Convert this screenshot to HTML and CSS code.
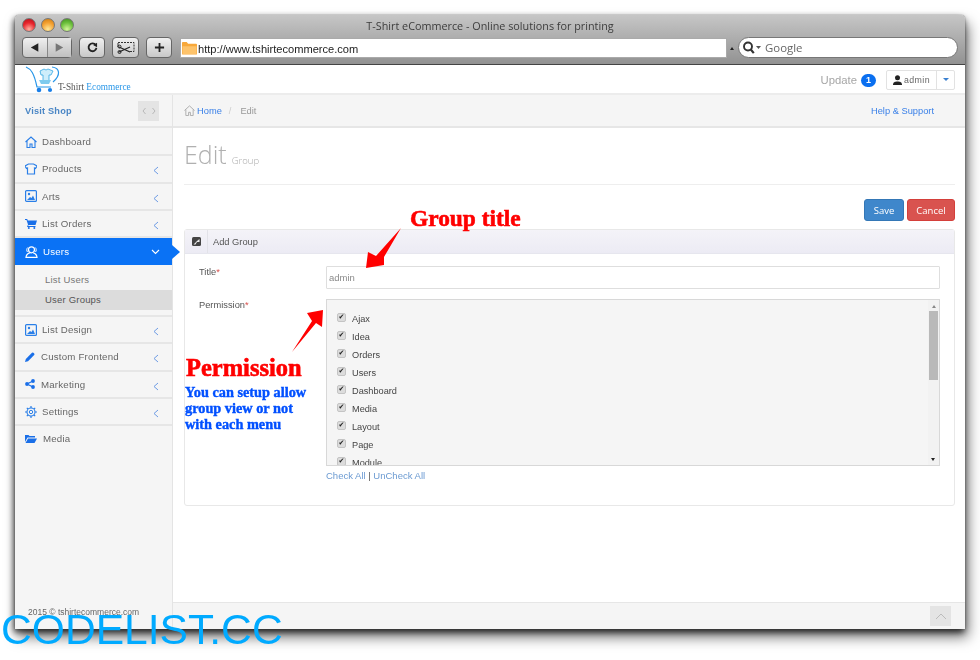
FILE: index.html
```html
<!DOCTYPE html>
<html lang="en">
<head>
<meta charset="utf-8">
<title>T-Shirt eCommerce</title>
<link rel="stylesheet" href="styles.css">
</head>
<body>
<div class="window">
  <header class="chrome">
    <div class="titlebar">
      <div class="lights"><i class="light red"></i><i class="light amber"></i><i class="light green"></i></div>
      <div class="wintitle">T-Shirt eCommerce - Online solutions for printing</div>
    </div>
    <div class="toolbar">
      <div class="tbtn pair">
        <span class="half"><svg width="10" height="9" viewBox="0 0 12 10"><path d="M1 5 10 0v10z" fill="#222"/></svg></span>
        <span class="half"><svg width="10" height="9" viewBox="0 0 12 10"><path d="M11 5 2 0v10z" fill="#777"/></svg></span>
      </div>
      <div class="tbtn w26"><svg width="11" height="11" viewBox="0 0 12 12"><path d="M9.500 3.200A4.300 4.300 0 1 0 10.300 6.500" fill="none" stroke="#222" stroke-width="2"/><path d="M6.600 3.400 11 .8v4.800z" fill="#222"/></svg></div>
      <div class="tbtn w27"><svg width="18" height="13" viewBox="0 0 18 13"><path d="M1 1.500h16v9h-5" fill="none" stroke="#333" stroke-dasharray="2 1"/><path d="M1 2v4" stroke="#333"/><path d="M2 6 13 11M2 11 13 6" stroke="#222" stroke-width="1.200"/><circle cx="2.500" cy="5.600" r="1.500" fill="none" stroke="#222"/><circle cx="2.500" cy="11" r="1.500" fill="none" stroke="#222"/></svg></div>
      <div class="tbtn w26"><svg width="11" height="11" viewBox="0 0 12 12"><path d="M6 1v10M1 6h10" stroke="#222" stroke-width="2"/></svg></div>
      <div class="urlbar">
        <svg class="folder" width="15" height="14" viewBox="0 0 16 14"><path d="M0 3V1.500Q0 .5 1 .5h4l1.500 2H15q1 0 1 1V13q0 1-1 1H1q-1 0-1-1z" fill="#f8a83a"/><path d="M.5 5h15v8.500H.5z" fill="#fdc36b"/></svg>
        <span>http://www.tshirtecommerce.com</span>
      </div>
      <div class="dropdot"></div>
      <div class="search">
        <svg width="20" height="13" viewBox="0 0 20 13"><circle cx="6" cy="5.500" r="4" fill="none" stroke="#333" stroke-width="1.900"/><path d="M8.800 8.500l3 3.600" stroke="#333" stroke-width="2.200"/><path d="M14 5h5l-2.500 3z" fill="#555"/></svg>
        <span>Google</span>
      </div>
    </div>
  </header>

  <div class="topbar">
    <div class="logo">
      <svg width="38" height="27" viewBox="0 0 38 27">
        <path d="M1 1C6 3 9 7 12 21h14" fill="none" stroke="#2a97e8" stroke-width="1.200"/>
        <path d="M27 1c8 1 9 8 1 15" fill="none" stroke="#2a97e8" stroke-width="1.200"/>
        <path d="M15 5l4-2 2 1 2-1 5 2-2 4h-2v6h-6V9h-2z" fill="#cfeefb" stroke="#35a7e2" stroke-width=".8"/>
        <path d="M14 14h12l-2 4H16z" fill="#7fcbee"/>
        <circle cx="14" cy="24" r="2.300" fill="#1a7fe8"/><circle cx="25" cy="24" r="2.100" fill="#1a7fe8"/>
      </svg>
      <span class="logotext">T-Shirt <b>Ecommerce</b></span>
    </div>
    <div class="topright">
      <span class="update">Update</span>
      <span class="badge">1</span>
      <div class="userbtn">
        <span class="username"><svg width="9" height="10" viewBox="0 0 9 10"><circle cx="4.500" cy="2.700" r="2.500" fill="#222"/><path d="M0 10c0-3 2-3.500 4.500-3.500S9 7 9 10z" fill="#222"/></svg>admin</span>
        <span class="usercaret"><i></i></span>
      </div>
    </div>
  </div>

  <div class="body">
    <aside class="sidebar">
      <div class="visit">
        <span>Visit Shop</span>
        <div class="arrows"><svg width="14" height="8" viewBox="0 0 14 8"><path d="M3.500 1 1 4l2.500 3M10.500 1 13 4l-2.500 3" fill="none" stroke="#b8b8b8"/></svg></div>
      </div>
      <nav class="menu">
        <a class="item"><svg class="ico" width="12" height="12" viewBox="0 0 12 12"><path d="M.5 6 6 1l5.500 5M2 5v6.500h3V8h2v3.500h3V5" fill="none" stroke="#2a7fe8" stroke-width="1.100"/></svg><span>Dashboard</span></a>
        <a class="item"><svg class="ico" width="12" height="12" viewBox="0 0 12 12"><path d="M3.500 1h5L12 3l-1.500 2.500-1-.5v6h-7V5l-1 .5L0 3z" fill="none" stroke="#2a7fe8" stroke-width="1.200"/></svg><span>Products</span><svg class="chev" width="6" height="9" viewBox="0 0 6 9"><path d="M5 1 1 4.500 5 8" fill="none" stroke="#6d9be4"/></svg></a>
        <a class="item"><svg class="ico" width="12" height="12" viewBox="0 0 12 12"><rect x=".6" y=".6" width="10.800" height="10.800" rx="1" fill="none" stroke="#2a7fe8" stroke-width="1.200"/><circle cx="4" cy="4" r="1.200" fill="#2a7fe8"/><path d="M2 10l3-3 1.500 1L8 5.500 10 10z" fill="#2a7fe8"/></svg><span>Arts</span><svg class="chev" width="6" height="9" viewBox="0 0 6 9"><path d="M5 1 1 4.500 5 8" fill="none" stroke="#6d9be4"/></svg></a>
        <a class="item"><svg class="ico" width="12" height="11" viewBox="0 0 12 11"><path d="M0 1h2.200l.6 1.500H12L10.500 7H3.500l-.3 1H10.500V9H2L3 6.500 1.500 2H0z" fill="#1a6fe8"/><circle cx="3.800" cy="10" r="1" fill="#1a6fe8"/><circle cx="9.300" cy="10" r="1" fill="#1a6fe8"/></svg><span>List Orders</span><svg class="chev" width="6" height="9" viewBox="0 0 6 9"><path d="M5 1 1 4.500 5 8" fill="none" stroke="#6d9be4"/></svg></a>
        <a class="item active"><svg class="ico" width="13" height="12" viewBox="0 0 13 12"><circle cx="6.500" cy="3.800" r="3" fill="none" stroke="#fff" stroke-width="1.200"/><path d="M4.800 6.800C2 7.500 1.200 9 1 11.400h11c-.2-2.400-1-3.900-3.800-4.600" fill="none" stroke="#fff" stroke-width="1.200"/><path d="M2.800 1.500C1.500 2.500 1.500 5 2.500 6M10.200 1.500c1.300 1 1.300 3.500.3 4.500" fill="none" stroke="#fff"/></svg><span>Users</span><svg class="chev down" width="9" height="6" viewBox="0 0 9 6"><path d="M1 1l3.500 3.500L8 1" fill="none" stroke="#fff" stroke-width="1.100"/></svg></a>
        <div class="submenu">
          <a class="subitem first">List Users</a>
          <a class="subitem current">User Groups</a>
        </div>
        <a class="item"><svg class="ico" width="12" height="12" viewBox="0 0 12 12"><rect x=".6" y=".6" width="10.800" height="10.800" rx="1" fill="none" stroke="#2a7fe8" stroke-width="1.200"/><circle cx="4" cy="4" r="1.200" fill="#2a7fe8"/><path d="M2 10l3-3 1.500 1L8 5.500 10 10z" fill="#2a7fe8"/></svg><span>List Design</span><svg class="chev" width="6" height="9" viewBox="0 0 6 9"><path d="M5 1 1 4.500 5 8" fill="none" stroke="#6d9be4"/></svg></a>
        <a class="item tight"><svg class="ico" width="10" height="10" viewBox="0 0 10 10"><path d="M0 10l.8-3L7 .8q.7-.6 1.400 0l.8.8q.6.7 0 1.400L3 9.200z" fill="#1a6fe8"/></svg><span>Custom Frontend</span><svg class="chev" width="6" height="9" viewBox="0 0 6 9"><path d="M5 1 1 4.500 5 8" fill="none" stroke="#6d9be4"/></svg></a>
        <a class="item tight"><svg class="ico" width="10" height="10" viewBox="0 0 10 10"><path d="M8 2 2 5l6 3" fill="none" stroke="#1a6fe8" stroke-width="1.200"/><circle cx="8" cy="2" r="1.900" fill="#1a6fe8"/><circle cx="2" cy="5" r="1.900" fill="#1a6fe8"/><circle cx="8" cy="8" r="1.900" fill="#1a6fe8"/></svg><span>Marketing</span><svg class="chev" width="6" height="9" viewBox="0 0 6 9"><path d="M5 1 1 4.500 5 8" fill="none" stroke="#6d9be4"/></svg></a>
        <a class="item"><svg class="ico" width="12" height="12" viewBox="0 0 12 12"><circle cx="6" cy="6" r="4" fill="none" stroke="#2a7fe8" stroke-width="1.100"/><circle cx="6" cy="6" r="1.700" fill="none" stroke="#2a7fe8"/><path d="M6 0v2M6 10v2M0 6h2M10 6h2M1.800 1.800l1.400 1.400M8.800 8.800l1.400 1.400M1.800 10.200l1.400-1.400M8.800 3.200l1.400-1.400" stroke="#2a7fe8" stroke-width="1.200"/></svg><span>Settings</span><svg class="chev" width="6" height="9" viewBox="0 0 6 9"><path d="M5 1 1 4.500 5 8" fill="none" stroke="#6d9be4"/></svg></a>
        <a class="item last"><svg class="ico" width="12" height="9" viewBox="0 0 12 9"><path d="M0 8V1h3.500l1 1H10v1.500H2.500z" fill="#1a6fe8"/><path d="M.5 9 3 4.500h9L9.500 9z" fill="#1a6fe8"/></svg><span>Media</span></a>
      </nav>
      <div class="copyright">2015 © tshirtecommerce.com</div>
    </aside>

    <main class="main">
      <div class="crumbbar">
        <div class="crumbs">
          <svg width="11" height="11" viewBox="0 0 12 12"><path d="M.5 6 6 1l5.500 5M2 5v6.500h3V8h2v3.500h3V5" fill="none" stroke="#aaa"/></svg>
          <a class="home">Home</a><span class="sep">/</span><span class="here">Edit</span>
        </div>
        <a class="help">Help &amp; Support</a>
      </div>
      <div class="content">
        <div class="pagehead"><h1>Edit</h1><small>Group</small></div>
        <div class="actions"><button class="btn save">Save</button><button class="btn cancel">Cancel</button></div>
        <section class="panel">
          <div class="panelhead">
            <div class="panelicon"><svg width="9" height="9" viewBox="0 0 9 9"><rect width="9" height="9" rx="1.500" fill="#444"/><path d="M1.500 7.500 5 4l2.500-2v3L5 5 3.500 7.500z" fill="#eee"/></svg></div>
            <span>Add Group</span>
          </div>
          <div class="panelbody">
            <div class="field">
              <label class="lbl">Title<em>*</em></label>
              <div class="titleinput">admin</div>
            </div>
            <div class="field perm">
              <label class="lbl">Permission<em>*</em></label>
              <div class="permcol">
                <div class="permbox">
                  <ul class="permlist">
                    <li><i class="chk">✔</i>Ajax</li>
                    <li><i class="chk">✔</i>Idea</li>
                    <li><i class="chk">✔</i>Orders</li>
                    <li><i class="chk">✔</i>Users</li>
                    <li><i class="chk">✔</i>Dashboard</li>
                    <li><i class="chk">✔</i>Media</li>
                    <li><i class="chk">✔</i>Layout</li>
                    <li><i class="chk">✔</i>Page</li>
                    <li><i class="chk">✔</i>Module</li>
                  </ul>
                  <div class="scroll"><i class="up"></i><div class="thumb"></div><i class="dn"></i></div>
                </div>
                <div class="checklinks"><a>Check All</a> | <a>UnCheck All</a></div>
              </div>
            </div>
          </div>
        </section>
      </div>
      <footer class="footer"><div class="totop"><svg width="12" height="7" viewBox="0 0 12 7"><path d="M1 6l5-5 5 5" fill="none" stroke="#bbb"/></svg></div></footer>
    </main>
  </div>
</div>

<div class="note note-title">Group title</div>
<svg class="arrows-layer" width="980" height="660" viewBox="0 0 980 660">
  <path d="M401 228 384 257 384 265 366 268 368 252 376 256z" fill="#f00"/>
  <path d="M292 352 312 321 307 313 323 310 322 327 316 323z" fill="#f00"/>
</svg>
<div class="note note-perm">Permission</div>
<div class="note note-desc">You can setup allow<br>group view or not<br>with each menu</div>
<div class="watermark">CODELIST.CC</div>
</body>
</html>
```

FILE: styles.css
```css
* { box-sizing: border-box; }
html, body { margin: 0; height: 660px; overflow: hidden; background: #fff; }
body { padding: 15px 15px 31px; font-family: "Liberation Sans", Arial, sans-serif; color: #555; position: relative; }

.window {
  width: 950px; height: 614px; display: flex; flex-direction: column;
  background: #fff; border-radius: 4px 4px 0 0; overflow: hidden;
  box-shadow: 0 0 1px #333, -1px 3px 6px rgba(0,0,0,.75), 3px 8px 14px rgba(0,0,0,.55);
  filter: blur(.4px);
}

/* browser chrome */
.chrome { height: 50px; flex: none; background: linear-gradient(#c6c6c6, #929292); border-bottom: 1px solid #444; }
.titlebar { height: 21px; position: relative; display: flex; align-items: center; justify-content: center; }
.lights { position: absolute; left: 7px; top: 3px; display: flex; gap: 5px; }
.light { width: 14px; height: 14px; border-radius: 50%; border: 1px solid #777; display: block; }
.red { background: radial-gradient(circle at 50% 85%, #ffb0a0, #e8242c 55%, #b01018); }
.amber { background: radial-gradient(circle at 50% 85%, #ffe89a, #f4a030 55%, #c87810); }
.green { background: radial-gradient(circle at 50% 85%, #d4f59a, #6cc03c 55%, #3c8a1c); }
.wintitle { font: 10.800px/1 "Open Sans", sans-serif; color: #3d3d3d; margin-top: 1px; }
.toolbar { height: 29px; display: flex; align-items: flex-start; padding: 1px 0 0 7px; }
.tbtn { height: 21px; border: 1px solid #666; border-radius: 4px; background: linear-gradient(#f0f0f0, #c8c8c8); display: flex; align-items: center; justify-content: center; margin-right: 7px; }
.pair { width: 50px; }
.half { flex: 1; height: 100%; display: flex; align-items: center; justify-content: center; }
.half + .half { border-left: 1px solid #888; background: linear-gradient(#e4e4e4, #c0c0c0); }
.w26 { width: 26px; }
.w27 { width: 27px; }
.urlbar { width: 547px; height: 20px; margin: 1px 0 0 1px; background: #fff; border: 1px solid #aaa; display: flex; align-items: center; gap: 1px; padding-left: 1px; font-size: 11.100px; color: #222; }
.urlbar span { margin-top: 1px; }
.folder { flex: none; }
.dropdot { width: 0; height: 0; margin: 10px 2px 0 3px; border: 2.500px solid transparent; border-top: 0; border-bottom: 3px solid #222; }
.search { width: 220px; height: 21px; border-radius: 11px; background: #fff; border: 1px solid #777; margin-left: 2px; display: flex; align-items: center; gap: 3px; padding-left: 3px; font: 11.400px "Open Sans", sans-serif; color: #666; }

/* app top bar */
.topbar { height: 30px; flex: none; display: flex; justify-content: space-between; background: #fff; border-bottom: 2px solid #ececec; }
.logo { display: flex; align-items: flex-end; margin-left: 10px; }
.logotext { font: 9.300px "Liberation Serif", serif; color: #555; margin-left: -5px; padding-bottom: 1px; white-space: nowrap; position: relative; }
.logotext b { font-weight: normal; color: #2a97e8; }
.topright { display: flex; align-items: center; padding: 1px 10px 0 0; }
.update { font-size: 11.300px; color: #a6a6a6; }
.badge { width: 15px; height: 13px; margin: 1px 10px 0 4px; border-radius: 7px; background: #0a6ff0; color: #fff; font-size: 9px; font-weight: bold; text-align: center; line-height: 13px; }
.userbtn { height: 20px; width: 69px; display: flex; border: 1px solid #e2e2e2; border-radius: 2px; background: #fff; }
.username { flex: 1; display: flex; align-items: center; justify-content: center; gap: 2px; font-size: 8.800px; letter-spacing: .4px; color: #666; border-right: 1px solid #e2e2e2; }
.usercaret { width: 17px; display: flex; align-items: center; justify-content: center; }
.usercaret i { border: 3px solid transparent; border-top-color: #3a80d0; border-bottom: 0; }

/* body */
.body { flex: 1; display: flex; min-height: 0; }
.sidebar { width: 158px; flex: none; background: #f5f5f5; border-right: 1px solid #e4e4e4; display: flex; flex-direction: column; }
.visit { height: 33px; flex: none; display: flex; align-items: center; justify-content: space-between; padding: 0 13px 0 10px; border-bottom: 2px solid #e6e6e6; font-size: 9.200px; font-weight: bold; color: #4a86c5; letter-spacing: .2px; }
.menu { display: flex; flex-direction: column; flex: 1; padding-top: 1px; }
.arrows { width: 21px; height: 20px; background: #e4e4e4; display: flex; align-items: center; justify-content: center; }
.item { height: 27.300px; display: flex; align-items: center; gap: 5px; padding: 0 13px 0 10px; border-bottom: 2px solid #e6e6e6; font-size: 9.700px; color: #666; letter-spacing: .2px; flex: none; }
.item .ico { flex: none; }
.item span { flex: 1; }
.item.tight { gap: 6px; }
.item.last { border-bottom: 0; gap: 6px; padding-bottom: 2px; }
.chev { margin: 4px 0 0; }
.chev.down { margin: 1px -1px 0 0; }
.item.active { background: #0a72f5; color: #fff; border-bottom: 0; height: 27px; position: relative; }
.item.active::after { content: ""; position: absolute; right: -8px; top: 7px; border: 7px solid transparent; border-left: 8px solid #0a72f5; border-right: 0; }
.submenu { padding: 4.800px 0 5px; background: #f5f5f5; border-bottom: 2px solid #e6e6e6; flex: none; }
.subitem { height: 20px; padding-left: 30px; display: flex; align-items: center; font-size: 9.500px; letter-spacing: .2px; color: #777; }
.subitem.first { padding-bottom: 1px; }
.subitem.current { background: #dcdcdc; color: #555; }
.copyright { height: 27px; flex: none; padding: 5px 0 0 13px; font-size: 8.500px; color: #666; }

.main { flex: 1; min-width: 0; display: flex; flex-direction: column; }
.crumbbar { height: 33px; flex: none; background: #f5f5f5; border-bottom: 2px solid #e6e6e6; display: flex; align-items: center; justify-content: space-between; padding: 0 31px 0 11px; font-size: 9.300px; }
.crumbs { display: flex; align-items: center; gap: 2px; }
.home { color: #3a80e8; }
.sep { color: #ccc; margin: 0 7px 0 5px; }
.here { color: #999; }
.help { color: #3a80e8; }
.content { flex: 1; padding: 0 10px 0 11px; background: #fff; }
.pagehead { height: 57px; display: flex; align-items: baseline; gap: 5px; padding-top: 11px; border-bottom: 1px solid #eee; }
.pagehead h1 { margin: 0; font: 300 25px/1.2 "Open Sans", sans-serif; color: #b0b0b0; }
.pagehead small { font: 300 9.500px "Open Sans", sans-serif; color: #aaa; }
.actions { display: flex; justify-content: flex-end; gap: 3px; margin-top: 14px; }
.btn { height: 22px; border-radius: 3px; font: 9.500px "Open Sans", sans-serif; color: #fff; padding: 0; }
.save { width: 40px; background: #3f87cb; border: 1px solid #3477b6; }
.cancel { width: 48px; background: #d9534f; border: 1px solid #d43f3a; }
.panel { margin-top: 8px; height: 277px; border: 1px solid #e8e8e8; border-radius: 3px; }
.panelhead { height: 24px; display: flex; align-items: center; background: linear-gradient(#f4f3f8, #ecebf4); border-bottom: 1px solid #e6e6ee; font-size: 9.300px; color: #555; }
.panelicon { width: 23px; height: 100%; display: flex; align-items: center; justify-content: center; border-right: 1px solid #e2e2e8; margin-right: 5px; }
.panelbody { padding: 12px 14px 0; display: flex; flex-direction: column; gap: 10px; }
.field { display: flex; align-items: flex-start; }
.lbl { width: 127px; flex: none; font-size: 9.300px; color: #555; padding-top: 1px; }
.lbl em { color: #d9534f; font-style: normal; }
.titleinput { flex: 1; height: 23px; border: 1px solid #dedede; border-radius: 1px; padding-left: 2px; font-size: 9.500px; line-height: 21px; color: #8a8a8a; }
.permcol { flex: 1; min-width: 0; }
.permbox { height: 167px; border: 1px solid #d8d8d8; background: #f5f5f5; display: flex; overflow: hidden; }
.permlist { list-style: none; margin: 0; padding: 10px 0 0 10px; flex: 1; }
.permlist li { height: 18px; display: flex; align-items: center; font-size: 9.200px; color: #444; }
.chk { width: 9px; height: 9px; margin-right: 6px; margin-top: -3px; background: #dcdcdc; border: 1px solid #c4c4c4; border-radius: 2px; font: 7px/7px "DejaVu Sans", sans-serif; color: #222; text-align: center; }
.scroll { width: 11px; background: #f2f2f2; display: flex; flex-direction: column; align-items: center; padding: 5px 0 0; position: relative; flex: none; }
.scroll .up { border: 2.500px solid transparent; border-top: 0; border-bottom: 3px solid #888; }
.thumb { width: 9px; height: 69px; margin-top: 3px; background: #b9b9b9; }
.scroll .dn { position: absolute; bottom: 4px; left: 3px; border: 2.500px solid transparent; border-bottom: 0; border-top: 3px solid #222; }
.checklinks { margin-top: 4px; font-size: 9.500px; color: #555; }
.checklinks a { color: #6c9bd2; }
.footer { height: 27px; flex: none; background: #f5f5f5; border-top: 1px solid #e6e6e6; display: flex; justify-content: flex-end; align-items: center; padding-right: 14px; }
.totop { width: 21px; height: 20px; background: #e4e4e4; display: flex; align-items: center; justify-content: center; }

/* annotations over the screenshot */
.note { position: absolute; font-family: "Liberation Serif", serif; font-weight: bold; white-space: nowrap; }
.note-title { left: 410px; top: 204px; font-size: 23.400px; line-height: 28px; color: #f00; -webkit-text-stroke: .6px #f00; }
.note-perm { left: 186px; top: 354px; font-size: 24.500px; line-height: 28px; color: #f00; -webkit-text-stroke: .6px #f00; }
.note-desc { left: 185px; top: 384px; font-size: 14.300px; line-height: 16px; color: #0050ff; -webkit-text-stroke: .4px #0050ff; }
.arrows-layer { position: absolute; left: 0; top: 0; }
.watermark { position: absolute; left: 1px; top: 606px; font: 42.600px/46px "Liberation Sans", sans-serif; color: #00aaff; white-space: nowrap; }
```
